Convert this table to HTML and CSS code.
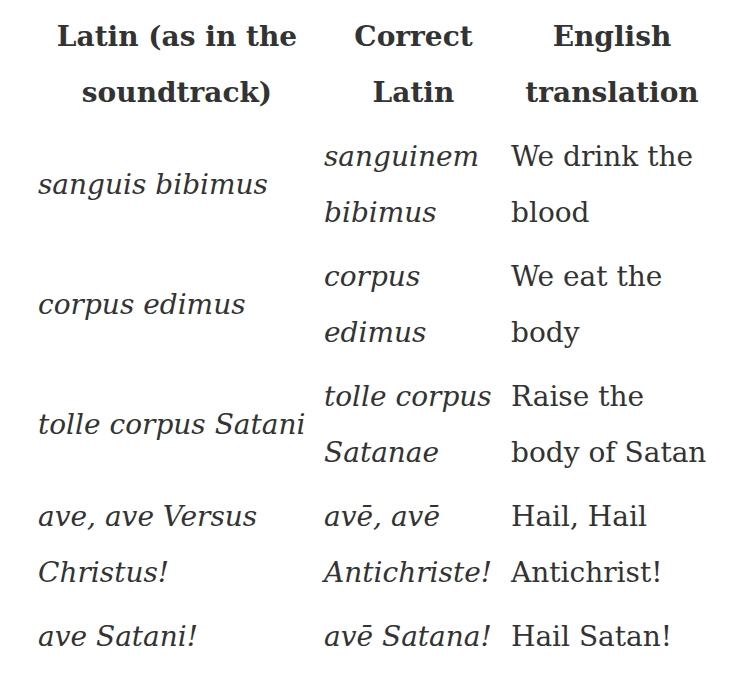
FILE: index.html
```html
<!DOCTYPE html>
<html lang="en">
<head>
<meta charset="utf-8">
<title>Latin translation</title>
<link rel="stylesheet" href="styles.css">
</head>
<body>
<table class="latin-table">
  <colgroup>
    <col class="c1"><col class="c2"><col class="c3">
  </colgroup>
  <thead>
    <tr>
      <th>Latin (as in the<br>soundtrack)</th>
      <th>Correct<br>Latin</th>
      <th>English<br>translation</th>
    </tr>
  </thead>
  <tbody>
    <tr>
      <td><em>sanguis bibimus</em></td>
      <td><em>sanguinem<br>bibimus</em></td>
      <td>We drink the<br>blood</td>
    </tr>
    <tr>
      <td><em>corpus edimus</em></td>
      <td><em>corpus<br>edimus</em></td>
      <td>We eat the<br>body</td>
    </tr>
    <tr>
      <td><em>tolle corpus Satani</em></td>
      <td><em>tolle corpus<br>Satanae</em></td>
      <td>Raise the<br>body of Satan</td>
    </tr>
    <tr>
      <td><em>ave, ave Versus<br>Christus!</em></td>
      <td><em>avē, avē<br>Antichriste!</em></td>
      <td>Hail, Hail<br>Antichrist!</td>
    </tr>
    <tr>
      <td><em>ave Satani!</em></td>
      <td><em>avē Satana!</em></td>
      <td>Hail Satan!</td>
    </tr>
  </tbody>
</table>
</body>
</html>
```
FILE: styles.css
```css
html, body {
  margin: 0;
  padding: 0;
  background: #ffffff;
}
body {
  font-family: "DejaVu Serif", "Liberation Serif", serif;
  color: #333333;
  font-size: 28px;
}
.latin-table {
  border-collapse: collapse;
  table-layout: fixed;
  margin: 5px 0 0 38px;
  width: 683px;
}
.latin-table .c1 { width: 286px; }
.latin-table .c2 { width: 187px; }
.latin-table .c3 { width: 210px; }
.latin-table th,
.latin-table td {
  padding: 4px 8px 4px 0;
  line-height: 56px;
  vertical-align: middle;
  text-align: left;
  white-space: nowrap;
}
.latin-table th {
  font-weight: bold;
  text-align: center;
}
.latin-table em {
  font-style: italic;
}
```
